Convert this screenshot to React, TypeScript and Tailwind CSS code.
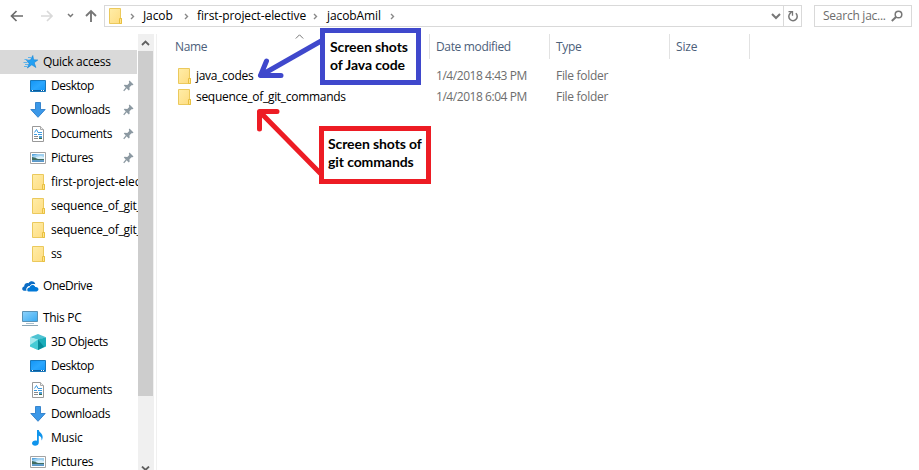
import type { ReactNode } from "react";

function Folder({ className = "" }: { className?: string }) {
  return (
    <svg width="13" height="16" viewBox="0 0 13 16" className={className}>
      <defs>
        <linearGradient id="fold" x1="0" y1="0" x2="1" y2="1">
          <stop offset="0" stopColor="#ffeda8" />
          <stop offset="1" stopColor="#fedc80" />
        </linearGradient>
      </defs>
      <path d="M.5.5h11v9.500l1 .5v5H.5z" fill="url(#fold)" stroke="#ebc95c" />
      <path d="M10.500 15.500v-5h2v5z" fill="#ffe48f" stroke="#e8c040" />
    </svg>
  );
}

function Star() {
  return (
    <svg width="16" height="16" viewBox="0 0 16 16">
      <path d="M9.800 1.500l.8 4.300 4.200.2-3.600 2.700 1.700 4.800-4.100-2.700L4.400 14l1.700-4.800L3.500 6.400l4-.5z" fill="#23a0f3" stroke="#1583d4" strokeWidth=".6" />
      <path d="M5 3.500h4M1.500 5.500h3M.5 8.500h4M2 10.500h3M1 12.500h3" stroke="#5db3ea" />
    </svg>
  );
}

function Desktop() {
  return (
    <svg width="16" height="16" viewBox="0 0 16 16">
      <defs>
        <linearGradient id="desk" x1="0" y1="0" x2="1" y2="1">
          <stop offset="0" stopColor="#1294f5" />
          <stop offset=".5" stopColor="#2aa7ff" />
          <stop offset="1" stopColor="#0f94f8" />
        </linearGradient>
      </defs>
      <path d="M.5 2.500h15v11H.5z" fill="url(#desk)" stroke="#1878bd" />
      <path d="M1 12.500h14" stroke="#0b5c9b" />
      <path d="M2 12.500h1M11 12.500h1M13 12.500h1" stroke="#fff" />
    </svg>
  );
}

function Download() {
  return (
    <svg width="16" height="16" viewBox="0 0 16 16">
      <path d="M5.500.5h5v7h4.700L8 15.300.8 7.500h4.700z" fill="#3b98e8" stroke="#2d7ec9" strokeWidth=".9" />
    </svg>
  );
}

function Document() {
  return (
    <svg width="16" height="16" viewBox="0 0 16 16">
      <path d="M2.500.5h8l3 3v12h-11z" fill="#fff" stroke="#999" />
      <path d="M10.500.5v3h3" fill="#eee" stroke="#aaa" />
      <path d="M4.500 6.500l2-3 1.500 3M4 8.500h3M8 6.500h4M8 8.500h4" fill="none" stroke="#3d9be0" />
      <path d="M4 10.500h4M4 12.500h4" stroke="#8b8b8b" />
      <path d="M9 10h3v3H9z" fill="#4f9ed4" />
      <path d="M9 12h3v1H9z" fill="#35684a" />
    </svg>
  );
}

function Picture() {
  return (
    <svg width="16" height="16" viewBox="0 0 16 16">
      <path d="M.5 2.500h15v11H.5z" fill="#fff" stroke="#a3a3a3" />
      <path d="M2 4h12v8H2z" fill="#9fd0f0" />
      <path d="M2 4h6L2 6z" fill="#5aa6df" />
      <path d="M6 7l5-1 3 1v2H6z" fill="#d9eff9" />
      <path d="M2 7l3 .8L8 9h6v1.200H2z" fill="#416d60" />
      <path d="M2 10.200h12V12H2z" fill="#5a98c9" />
    </svg>
  );
}

function Cloud() {
  return (
    <svg width="17" height="16" viewBox="0 0 17 16">
      <path d="M2 12.800C-.6 12.400-.2 8.700 2.200 8.500 2 5.800 4.600 4.400 6.500 5.200 8.500 2 12.800 3 13.300 6.300 11 5.500 9 6 8 8c-2.400-.4-4 2-3.200 4.800z" fill="#0b6cc4" />
      <path d="M6.500 13.500c-2.300-.4-2-4 .9-4.100C8 6.200 12.400 5.800 13.300 9c3.700-.4 4.200 4 1.300 4.500z" fill="#0078d7" />
      <path d="M4.900 12.800C4.300 9.800 5.800 8.600 7.500 8.800 8.600 6.300 12 5.500 13.600 8.300" fill="none" stroke="#fff" strokeWidth=".8" />
    </svg>
  );
}

function Computer() {
  return (
    <svg width="16" height="16" viewBox="0 0 16 16">
      <defs>
        <linearGradient id="scr" x1="0" y1="0" x2="1" y2="1">
          <stop offset="0" stopColor="#8fd3fb" />
          <stop offset="1" stopColor="#38aaf2" />
        </linearGradient>
      </defs>
      <path d="M.5 1.500h15v10H.5z" fill="url(#scr)" stroke="#5a92b5" />
      <path d="M4 13.500h8" stroke="#a9c0cd" />
      <path d="M0 15.500h16" stroke="#8ba5b4" />
    </svg>
  );
}

function Cube() {
  return (
    <svg width="16" height="16" viewBox="0 0 16 16">
      <path d="M0 3.200L8 0l8 3.200L8 6z" fill="#4fc3d3" />
      <path d="M0 3.200L8 5.500V16l-8-3.500z" fill="#a5e9ee" />
      <path d="M0 11l8-5.500V16l-8-3.500z" fill="#45cbd5" />
      <path d="M8 5.500l8-2.300v9.300L8 16z" fill="#1badba" />
      <path d="M8 5.500L14 12.800 8 16z" fill="#078b99" />
    </svg>
  );
}

function Music() {
  return (
    <svg width="16" height="16" viewBox="0 0 16 16">
      <path d="M7 0h1.800c.3 2.800 4.700 3.500 3.700 8.200-.1 1-.5 1.800-1 2.200.2-3-.8-4-2.700-4.600v6.700C8.800 16.500 2 16.700 2 13.200 2 11 4.700 9.800 7 10.700z" fill="#0f94ec" />
    </svg>
  );
}

function Pin() {
  return (
    <svg width="11" height="12" viewBox="0 0 11 12">
      <path d="M6.500.5l4 4-1 .8-1-.1-2 2 .1 2.600-.8.700-5-5 .7-.8L4.300 5l2-2-.5-1.500z" fill="#8c99a2" />
      <path d="M3.500 7.500L.7 10.800" stroke="#8c99a2" strokeWidth="1.200" />
    </svg>
  );
}

function Chevron({ className = "" }: { className?: string }) {
  return (
    <svg width="5" height="7" viewBox="0 0 5 7" className={className}>
      <path d="M1 1l2.500 2.500L1 6" fill="none" stroke="#888" strokeWidth="1.400" />
    </svg>
  );
}

type Entry = { icon: ReactNode; label: string; track: string; pinned?: boolean };

function SideRow({ icon, label, track, pinned }: Entry) {
  return (
    <div className="flex h-6 w-[138px] items-center overflow-hidden pl-[30px]">
      <span className="flex w-[21px] shrink-0">{icon}</span>
      <span className={`whitespace-nowrap ${track}`}>{label}</span>
      {pinned && <span className="ml-auto mr-1"><Pin /></span>}
    </div>
  );
}

const quick: Entry[] = [
  { icon: <Desktop />, label: "Desktop", track: "tracking-[-0.5px]", pinned: true },
  { icon: <Download />, label: "Downloads", track: "tracking-[-0.4px]", pinned: true },
  { icon: <Document />, label: "Documents", track: "tracking-[-0.35px]", pinned: true },
  { icon: <Picture />, label: "Pictures", track: "tracking-[-0.35px]", pinned: true },
  { icon: <Folder className="ml-0.5" />, label: "first-project-elective", track: "tracking-[-0.1px]" },
  { icon: <Folder className="ml-0.5" />, label: "sequence_of_git_commands", track: "tracking-[-0.25px]" },
  { icon: <Folder className="ml-0.5" />, label: "sequence_of_git_commands", track: "tracking-[-0.25px]" },
  { icon: <Folder className="ml-0.5" />, label: "ss", track: "tracking-[-0.4px]" },
];

const computer: Entry[] = [
  { icon: <Cube />, label: "3D Objects", track: "tracking-[-0.4px]" },
  { icon: <Desktop />, label: "Desktop", track: "tracking-[-0.5px]" },
  { icon: <Document />, label: "Documents", track: "tracking-[-0.35px]" },
  { icon: <Download />, label: "Downloads", track: "tracking-[-0.4px]" },
  { icon: <Music />, label: "Music", track: "tracking-[-0.2px]" },
  { icon: <Picture />, label: "Pictures", track: "tracking-[-0.35px]" },
];

const files = [
  { name: "java_codes", date: "1/4/2018 4:43 PM" },
  { name: "sequence_of_git_commands", date: "1/4/2018 6:04 PM" },
];

function Toolbar() {
  return (
    <header className="flex h-[34px] shrink-0 items-start pt-[5px]">
      <svg width="104" height="22" viewBox="0 0 104 22" fill="none">
        <path d="M12 11h11M16.500 6l-5 5 5 5" stroke="#6c6c6c" strokeWidth="1.700" />
        <path d="M41 11h11M47 6l5 5-5 5" stroke="#d9d9d9" strokeWidth="1.700" />
        <path d="M68 9l2.500 2.500L73 9" stroke="#777" strokeWidth="1.500" />
        <path d="M91 17V6M86 11l5-5 5 5" stroke="#777" strokeWidth="1.900" />
      </svg>
      <div className="flex h-[22px] w-[698px] items-center border border-[#d9d9d9]">
        <Folder className="ml-1" />
        <Chevron className="ml-2" />
        <span className="ml-2 w-8 whitespace-nowrap tracking-[-0.1px]">Jacob</span>
        <Chevron className="ml-[9px]" />
        <span className="ml-2 w-[108px] whitespace-nowrap tracking-[-0.1px]">first-project-elective</span>
        <Chevron className="ml-2" />
        <span className="ml-[9px] w-[55px] whitespace-nowrap tracking-[-0.1px]">jacobAmil</span>
        <Chevron className="ml-2" />
        <svg width="10" height="7" viewBox="0 0 10 7" className="ml-auto mr-0.5 mt-px" fill="none">
          <path d="M1 1l4 4 4-4" stroke="#777" strokeWidth="2" />
        </svg>
        <div className="flex h-5 w-[18px] items-center justify-center border-l border-[#d9d9d9]">
          <svg width="12" height="13" viewBox="0 0 12 13" fill="none">
            <path d="M8.800 3.300A4.200 4.200 0 1 1 3 3.500L4.500 2" stroke="#777" strokeWidth="1.500" />
            <path d="M1.500 1.700h4v4" stroke="#777" strokeWidth="1.300" />
          </svg>
        </div>
      </div>
      <div className="ml-3 flex h-[22px] w-[98px] items-center border border-[#d9d9d9] pl-2 text-[#6d6d6d]">
        <span className="whitespace-nowrap tracking-[-0.25px]">Search jac...</span>
        <svg width="12" height="12" viewBox="0 0 12 12" className="ml-auto mr-2" fill="none" stroke="#777">
          <circle cx="7.500" cy="4.500" r="3.300" strokeWidth="1.500" />
          <path d="M5 7L.8 11" strokeWidth="2" />
        </svg>
      </div>
    </header>
  );
}

function Scrollbar() {
  return (
    <div className="flex w-4 shrink-0 flex-col bg-[#f0f0f0]">
      <div className="flex h-[17px] items-center justify-center pr-px">
        <svg width="9" height="6" viewBox="0 0 9 6" fill="none"><path d="M1 5l3.500-3.500L8 5" stroke="#606060" strokeWidth="1.800" /></svg>
      </div>
      <div className="h-[345px] w-[15px] bg-[#cdcdcd]" />
      <div className="mt-auto flex h-1 justify-center overflow-hidden pr-px">
        <svg width="9" height="6" viewBox="0 0 9 6" fill="none" className="shrink-0"><path d="M1 .5L4.500 4 8 .5" stroke="#606060" strokeWidth="1.800" /></svg>
      </div>
    </div>
  );
}

export default function App() {
  return (
    <div className="relative flex h-[470px] w-[919px] flex-col overflow-hidden bg-white font-['Open_Sans','Noto_Sans',sans-serif] text-[12px] leading-4 text-black">
      <Toolbar />
      <div className="flex min-h-0 flex-1">
        <nav className="w-[138px] shrink-0 overflow-hidden pt-4">
          <div className="flex h-6 w-[137px] items-center bg-[#d9d9d9] pl-[23px]">
            <span className="w-5"><Star /></span>
            <span className="whitespace-nowrap tracking-[-0.3px]">Quick access</span>
          </div>
          {quick.map((e, i) => <SideRow key={i} {...e} />)}
          <div className="mt-2 flex h-6 items-center pl-[22px]">
            <span className="w-[21px]"><Cloud /></span>
            <span className="tracking-[-0.45px]">OneDrive</span>
          </div>
          <div className="mt-2 flex h-6 items-center pl-[22px]">
            <span className="w-[21px]"><Computer /></span>
            <span className="tracking-[-0.3px]">This PC</span>
          </div>
          {computer.map((e, i) => <SideRow key={i} {...e} />)}
        </nav>
        <Scrollbar />
        <main className="ml-0.5 flex-1 border-l border-[#f0f0f0]">
          <div className="flex h-[25px] items-center text-[#4c607a]">
            <div className="flex h-full w-[273px] items-center border-r border-[#e2e2e2] pl-[18px]">
              <span className="w-[120px] tracking-[-0.35px]">Name</span>
              <svg width="9" height="5" viewBox="0 0 9 5" fill="none" className="mb-[21px]"><path d="M.8 4.500l3.700-3.700 3.700 3.700" stroke="#777" /></svg>
            </div>
            <div className="flex h-full w-[120px] items-center border-r border-[#e2e2e2] pl-1.5 tracking-[-0.35px]">Date modified</div>
            <div className="flex h-full w-[120px] items-center border-r border-[#e2e2e2] pl-1.5 tracking-[-0.3px]">Type</div>
            <div className="flex h-full w-20 items-center border-r border-[#e2e2e2] pl-1.5 tracking-[-0.2px]">Size</div>
          </div>
          <div className="pt-1.5">
            {files.map((f) => (
              <div key={f.name} className="flex h-[21px] items-center text-[#6d6d6d]">
                <div className="flex w-[279px] items-center pl-[21px] text-black">
                  <Folder />
                  <span className="ml-[5px] whitespace-nowrap tracking-[-0.3px]">{f.name}</span>
                </div>
                <span className="w-[120px] whitespace-nowrap tracking-[-0.45px]">{f.date}</span>
                <span className="whitespace-nowrap tracking-[-0.3px]">File folder</span>
              </div>
            ))}
          </div>
        </main>
      </div>
      <svg className="absolute left-[250px] top-[34px]" width="76" height="146" viewBox="250 34 76 146" fill="none" strokeWidth="5" strokeLinecap="round" strokeLinejoin="round">
        <path d="M322 40.500L260.500 75.500M266.500 61L260.500 75.500H281" stroke="#3f48cc" />
        <path d="M320 173L260 112M277 111.500H259.500V129" stroke="#ed1c24" />
      </svg>
      <div className="absolute left-[320px] top-[28px] h-[57px] w-[101px] whitespace-nowrap border-[5px] border-[#3f48cc] bg-white pl-[5px] pt-[5px] font-['Lato'] text-[14px] font-bold leading-[18px] tracking-[-0.1px]">
        Screen shots<br />of Java code
      </div>
      <div className="absolute left-[319px] top-[126px] h-[58px] w-[112px] whitespace-nowrap border-[5px] border-[#ed1c24] bg-white pl-1 pt-1 font-['Lato'] text-[14px] font-bold leading-[18px] tracking-[-0.1px]">
        Screen shots of<br />git commands
      </div>
    </div>
  );
}
